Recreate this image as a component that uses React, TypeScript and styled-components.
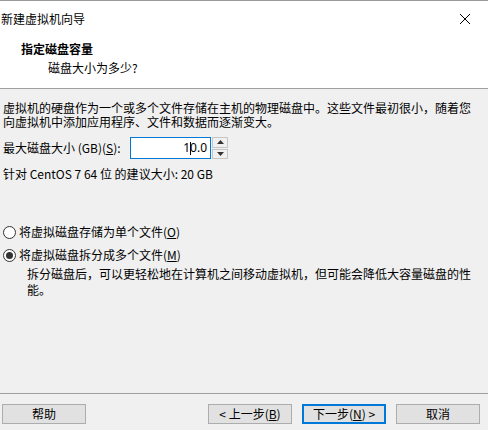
import React from "react";
import styled, { createGlobalStyle } from "styled-components";

const GlobalStyle = createGlobalStyle`
  html, body {
    margin: 0;
    padding: 0;
    background: #f0f0f0;
  }
  * {
    box-sizing: border-box;
  }
`;

const FONT = `"Microsoft YaHei UI", "Noto Sans CJK SC", "Noto Sans", sans-serif`;

const Window = styled.div`
  width: 488px;
  height: 430px;
  display: flex;
  flex-direction: column;
  background: #f0f0f0;
  font-family: ${FONT};
  font-size: 12px;
  color: #000;
  border-top: 1px solid #9a9a9a;
`;

const TitleBar = styled.div`
  height: 35px;
  background: #fff;
  display: flex;
  align-items: center;
  justify-content: space-between;
  padding: 0 8px 0 1px;
  line-height: 16px;
`;

const CloseButton = styled.div`
  width: 30px;
  height: 30px;
  display: flex;
  align-items: center;
  justify-content: center;
`;

const Header = styled.div`
  height: 53px;
  background: #fff;
  border-bottom: 1px solid #a0a0a0;
  padding: 5px 0 0 21px;
  display: flex;
  flex-direction: column;
  gap: 3px;
  line-height: 16px;
`;

const HeaderTitle = styled.div`
  font-weight: bold;
`;

const HeaderSub = styled.div`
  padding-left: 27px;
`;

const Body = styled.div`
  flex: 1;
  padding: 12px 3px 0 3px;
  display: flex;
  flex-direction: column;
  line-height: 14px;
`;

const Paragraph = styled.p`
  margin: 0;
  width: 472px;
`;

const SizeRow = styled.div`
  display: flex;
  align-items: center;
  margin-top: 8px;
  height: 22px;
`;

const Label = styled.span`
  width: 127px;
`;

const SpinBox = styled.div`
  display: flex;
  height: 22px;
`;

const Input = styled.div`
  width: 81px;
  height: 22px;
  background: #fff;
  border: 1px solid #0078d7;
  display: flex;
  align-items: center;
  justify-content: flex-end;
  padding-right: 3px;
  font-family: "Segoe UI", "Noto Sans", sans-serif;
`;

const Caret = styled.span`
  display: inline-block;
  width: 1px;
  height: 13px;
  background: #000;
  margin-right: -1px;
`;

const Spinner = styled.div`
  width: 16px;
  height: 22px;
  display: flex;
  flex-direction: column;
  margin-left: 1px;
  gap: 1px;
`;

const SpinButton = styled.div`
  flex: 1;
  background: #f0f0f0;
  border: 1px solid #c6c6c6;
  display: flex;
  align-items: center;
  justify-content: center;
`;

const Hint = styled.div`
  margin-top: 8px;
  font-family: "Segoe UI", ${FONT};
`;

const Options = styled.div`
  margin-top: 44px;
  display: flex;
  flex-direction: column;
  gap: 9px;
`;

const RadioRow = styled.label`
  display: flex;
  align-items: center;
  gap: 3px;
  height: 14px;
`;

const RadioCircle = styled.span<{ $checked?: boolean }>`
  width: 13px;
  height: 13px;
  border-radius: 50%;
  border: 1px solid #333;
  background: #fff;
  display: flex;
  align-items: center;
  justify-content: center;
  &::after {
    content: "";
    width: 7px;
    height: 7px;
    border-radius: 50%;
    background: ${(p) => (p.$checked ? "#333" : "transparent")};
  }
`;

const Description = styled.p`
  margin: 4px 0 0 24px;
  line-height: 16px;
  width: 450px;
`;

const Footer = styled.div`
  height: 37px;
  border-top: 1px solid #a0a0a0;
  display: flex;
  align-items: flex-start;
  padding: 10px 8px 0 2px;
`;

const Button = styled.div<{ $primary?: boolean }>`
  width: 84px;
  height: 20px;
  background: #e1e1e1;
  border: ${(p) => (p.$primary ? "2px solid #0078d7" : "1px solid #adadad")};
  display: flex;
  align-items: center;
  justify-content: center;
  line-height: 14px;
`;

const Spacer = styled.div`
  flex: 1;
`;

const ButtonGroup = styled.div`
  display: flex;
  gap: 10px;
  margin-right: 10px;
`;

const U = styled.span`
  text-decoration: underline;
`;

export default function App() {
  return (
    <>
      <GlobalStyle />
      <Window>
        <TitleBar>
          <span>新建虚拟机向导</span>
          <CloseButton>
            <svg width="12" height="12" viewBox="0 0 12 12">
              <path d="M1 1 L11 11 M11 1 L1 11" stroke="#000" strokeWidth="1" />
            </svg>
          </CloseButton>
        </TitleBar>
        <Header>
          <HeaderTitle>指定磁盘容量</HeaderTitle>
          <HeaderSub>磁盘大小为多少?</HeaderSub>
        </Header>
        <Body>
          <Paragraph>
            虚拟机的硬盘作为一个或多个文件存储在主机的物理磁盘中。这些文件最初很小，随着您向虚拟机中添加应用程序、文件和数据而逐渐变大。
          </Paragraph>
          <SizeRow>
            <Label>
              最大磁盘大小 (GB)(<U>S</U>):
            </Label>
            <SpinBox>
              <Input>
                1<Caret />0.0
              </Input>
              <Spinner>
                <SpinButton>
                  <svg width="7" height="4" viewBox="0 0 7 4">
                    <path d="M0 4 L3.5 0 L7 4 Z" fill="#333" />
                  </svg>
                </SpinButton>
                <SpinButton>
                  <svg width="7" height="4" viewBox="0 0 7 4">
                    <path d="M0 0 L3.5 4 L7 0 Z" fill="#333" />
                  </svg>
                </SpinButton>
              </Spinner>
            </SpinBox>
          </SizeRow>
          <Hint>针对 CentOS 7 64 位 的建议大小: 20 GB</Hint>
          <Options>
            <RadioRow>
              <RadioCircle />
              <span>
                将虚拟磁盘存储为单个文件(<U>O</U>)
              </span>
            </RadioRow>
            <RadioRow>
              <RadioCircle $checked />
              <span>
                将虚拟磁盘拆分成多个文件(<U>M</U>)
              </span>
            </RadioRow>
          </Options>
          <Description>
            拆分磁盘后，可以更轻松地在计算机之间移动虚拟机，但可能会降低大容量磁盘的性能。
          </Description>
        </Body>
        <Footer>
          <Button>帮助</Button>
          <Spacer />
          <ButtonGroup>
            <Button>
              &lt; 上一步(<U>B</U>)
            </Button>
            <Button $primary>
              下一步(<U>N</U>) &gt;
            </Button>
          </ButtonGroup>
          <Button>取消</Button>
        </Footer>
      </Window>
    </>
  );
}
